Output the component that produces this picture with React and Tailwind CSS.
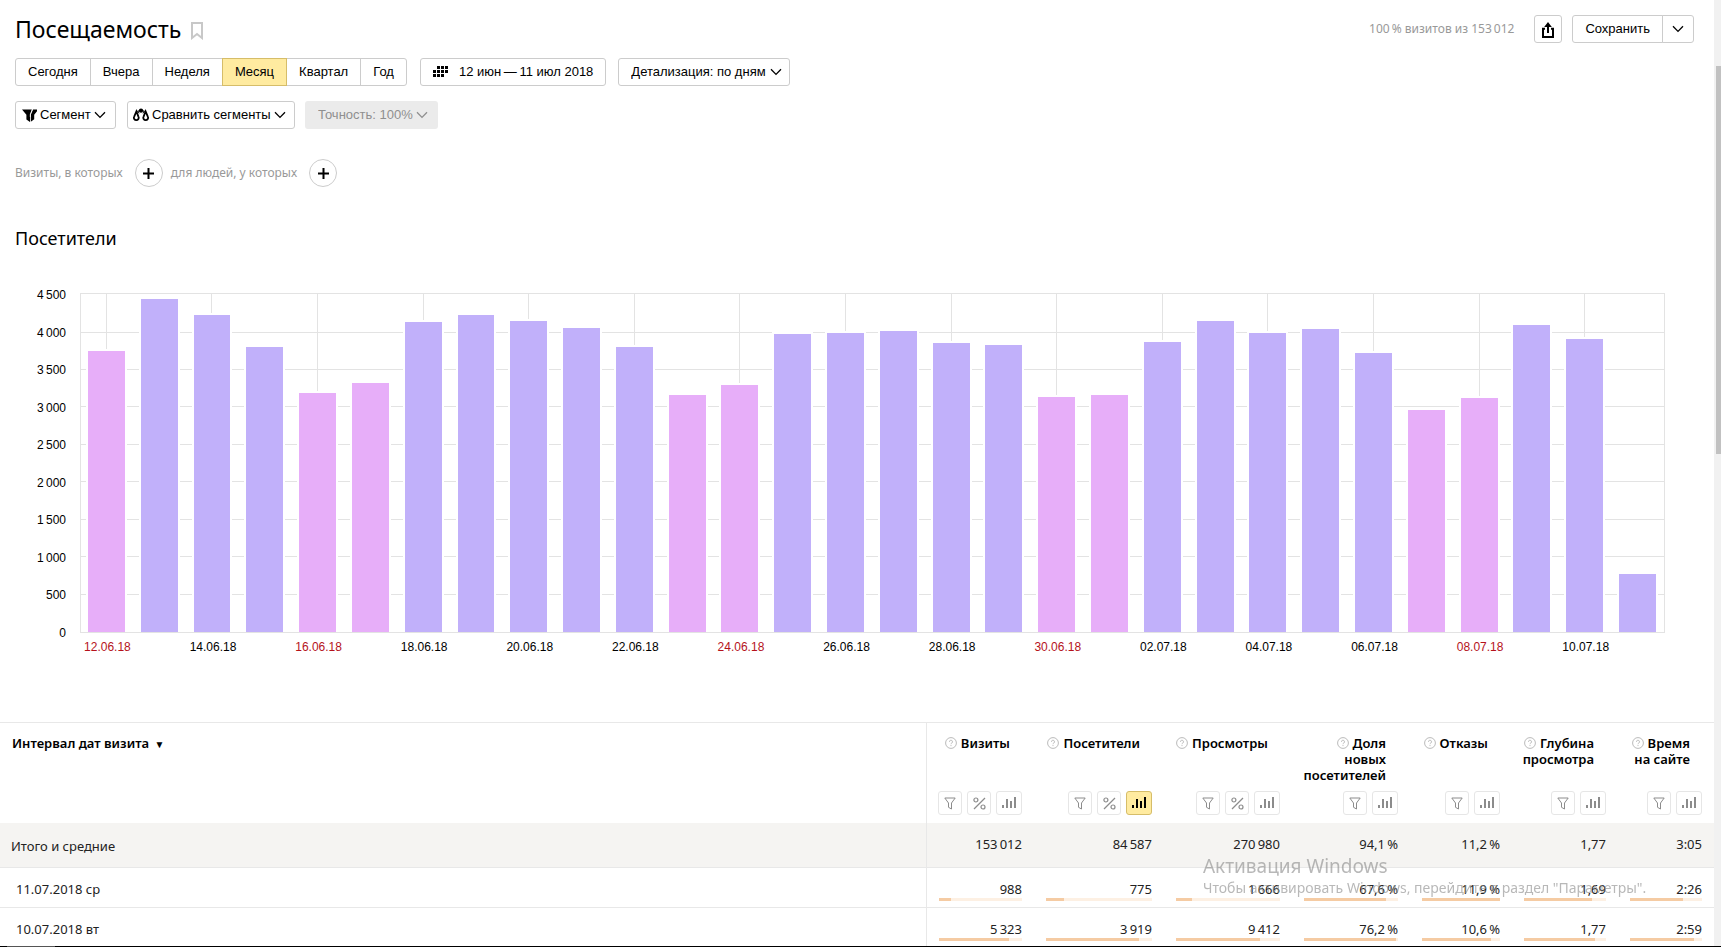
import React from 'react';
import clsx from 'clsx';

const periods = ['Сегодня', 'Вчера', 'Неделя', 'Месяц', 'Квартал', 'Год'];

const visitors = [
  { date: '12.06.18', value: 3760, holiday: true },
  { date: '13.06.18', value: 4453 },
  { date: '14.06.18', value: 4240 },
  { date: '15.06.18', value: 3813 },
  { date: '16.06.18', value: 3187, holiday: true },
  { date: '17.06.18', value: 3333, holiday: true },
  { date: '18.06.18', value: 4135 },
  { date: '19.06.18', value: 4240 },
  { date: '20.06.18', value: 4150 },
  { date: '21.06.18', value: 4065 },
  { date: '22.06.18', value: 3813 },
  { date: '23.06.18', value: 3160, holiday: true },
  { date: '24.06.18', value: 3295, holiday: true },
  { date: '25.06.18', value: 3975 },
  { date: '26.06.18', value: 3990 },
  { date: '27.06.18', value: 4025 },
  { date: '28.06.18', value: 3860 },
  { date: '29.06.18', value: 3830 },
  { date: '30.06.18', value: 3135, holiday: true },
  { date: '01.07.18', value: 3165, holiday: true },
  { date: '02.07.18', value: 3875 },
  { date: '03.07.18', value: 4150 },
  { date: '04.07.18', value: 4000 },
  { date: '05.07.18', value: 4053 },
  { date: '06.07.18', value: 3733 },
  { date: '07.07.18', value: 2960, holiday: true },
  { date: '08.07.18', value: 3120, holiday: true },
  { date: '09.07.18', value: 4107 },
  { date: '10.07.18', value: 3919 },
  { date: '11.07.18', value: 775 }
];

// top edge of the plot sits a little above the last tick
const SCALE_MAX = 4515;
const ticks = [4500, 4000, 3500, 3000, 2500, 2000, 1500, 1000, 500, 0];

const columns = [
  { title: ['Визиты'], percent: true, width: 'w-[107px]' },
  { title: ['Посетители'], percent: true, active: true, width: 'w-[130px]' },
  { title: ['Просмотры'], percent: true, width: 'w-[128px]' },
  { title: ['Доля', 'новых', 'посетителей'], width: 'w-[118px]' },
  { title: ['Отказы'], width: 'w-[102px]' },
  { title: ['Глубина', 'просмотра'], width: 'w-[106px]' },
  { title: ['Время', 'на сайте'], width: 'w-[96px]' }
];

const totals = ['153\u2009012', '84\u2009587', '270\u2009980', '94,1\u2009%', '11,2\u2009%', '1,77', '3:05'];

const rows = [
  {
    date: '11.07.2018 ср',
    cells: [
      ['988', 15], ['775', 17], ['1\u2009666', 15], ['67,6\u2009%', 87], ['11,9\u2009%', 100], ['1,69', 83], ['2:26', 74]
    ]
  },
  {
    date: '10.07.2018 вт',
    cells: [
      ['5\u2009323', 84], ['3\u2009919', 88], ['9\u2009412', 81], ['76,2\u2009%', 98], ['10,6\u2009%', 89], ['1,77', 87], ['2:59', 89]
    ]
  }
];

const formatTick = (n) => (n >= 1000 ? `${Math.floor(n / 1000)}\u2009${String(n % 1000).padStart(3, '0')}` : n);

const Chevron = ({ className }) => (
  <svg width="12" height="8" viewBox="0 0 12 8" fill="none" stroke="currentColor" strokeWidth="1.3" className={className}>
    <path d="M1 1.2 6 6.4 11 1.2" />
  </svg>
);

const FunnelIcon = () => (
  <svg width="15" height="13" viewBox="0 0 15 13" fill="currentColor">
    <path d="M0 .5h9.8L8 5.4V13l-3.6-2.4V5.8z" />
    <path d="M11 .5h4v1.7L12.2 5.8v4.4L8.8 12.8V5.4z" />
    <path d="M10.6.3 8.3 5.6V8" stroke="#fff" strokeWidth=".7" fill="none" />
  </svg>
);

const ScalesIcon = () => (
  <svg width="16" height="14" viewBox="0 0 16 14" fill="currentColor">
    <circle cx="8" cy="2.6" r="2.2" />
    <path d="M3.4 3.4 5.4 8.6a2.4 2.4 0 1 1-4.2 0zM12.6 3.4l2.2 5.2a2.4 2.4 0 1 1-4.2 0z" fill="none" stroke="currentColor" strokeWidth="1.8" />
    <path d="M4 3.2 5.4 2l1 4zM12 3.2 10.6 2l-1 4z" />
  </svg>
);

const CalendarIcon = () => (
  <svg width="16" height="12" viewBox="0 0 16 12" fill="currentColor">
    {[4, 8, 12].map((x) => <rect key={x} x={x} y="0" width="3" height="3" />)}
    {[0, 4, 8, 12].map((x) => <rect key={x} x={x} y="4" width="3" height="3" />)}
    {[0, 4, 8].map((x) => <rect key={x} x={x} y="8" width="3" height="3" />)}
  </svg>
);

const ExportIcon = () => (
  <svg width="12" height="16" viewBox="0 0 12 16" className="mt-0.5">
    <path d="M3 6.8H1V15h10V6.8H9" fill="none" stroke="currentColor" strokeWidth="2" />
    <path d="M6 0l3.8 5H7v6H5V5H2.2z" fill="currentColor" />
  </svg>
);

const FilterIcon = () => (
  <svg width="12" height="13" viewBox="0 0 12 13" fill="none" stroke="currentColor" strokeWidth="1">
    <path d="M.8 1h10.4L7.5 6v6L4.5 10.3V6z" />
  </svg>
);

const PercentIcon = () => (
  <svg width="13" height="13" viewBox="0 0 13 13" fill="none" stroke="currentColor" strokeWidth="1.2">
    <circle cx="2.9" cy="3" r="2" />
    <circle cx="10" cy="10" r="2" />
    <path d="M12 1 1 12" />
  </svg>
);

const BarsIcon = () => (
  <svg width="15" height="12" viewBox="0 0 15 12" fill="currentColor">
    <rect x="0" y="8" width="2" height="3" />
    <rect x="4" y="2" width="2" height="9" />
    <rect x="8" y="4" width="2" height="7" />
    <rect x="12" y="0" width="2" height="11" />
  </svg>
);

const HelpIcon = () => (
  <svg width="12" height="12" viewBox="0 0 12 12" fill="none" stroke="#b3b3b3" strokeWidth=".9" className="mr-1 inline-block align-[-1px]">
    <circle cx="6" cy="6" r="5.4" />
    <path d="M4.5 4.8a1.5 1.5 0 1 1 2.3 1.2c-.6.4-.8.6-.8 1.2M6 8.1v1" />
  </svg>
);

const IconButton = ({ label, active, wide, children }) => (
  <button
    type="button"
    aria-label={label}
    className={clsx(
      'flex h-6 items-center justify-center rounded-[3px] border',
      wide ? 'w-[26px]' : 'w-6',
      active ? 'border-[#d6bd69] bg-[#ffeba0] text-black' : 'border-[#e6e6e6] text-[#8c8c8c]'
    )}
  >
    {children}
  </button>
);

const PlusButton = ({ label }) => (
  <button type="button" aria-label={label} className="flex h-7 w-7 items-center justify-center rounded-full border border-[#ccc]">
    <svg width="11" height="11" viewBox="0 0 11 11" stroke="currentColor" strokeWidth="2">
      <path d="M5.5 0v11M0 5.5h11" />
    </svg>
  </button>
);

const Toolbar = () => (
  <div className="px-[15px] font-['Liberation_Sans',sans-serif] text-[13px]">
    <div className="mt-[15px] flex gap-3">
      <div className="mr-px flex h-7">
        {periods.map((period) => (
          <button
            key={period}
            type="button"
            className={clsx(
              '-ml-px border px-3 first:ml-0 first:rounded-l-[3px] last:rounded-r-[3px]',
              period === 'Месяц' ? 'relative border-[#d6bd69] bg-[#ffeba0]' : 'border-[#ccc]'
            )}
          >
            {period}
          </button>
        ))}
      </div>
      <button type="button" className="flex h-7 items-center gap-2.5 rounded-[3px] border border-[#ccc] px-3">
        <CalendarIcon />
        {'12 июн\u2009—\u200911 июл 2018'}
      </button>
      <div className="relative">
        <select aria-label="Детализация" className="h-7 w-[172px] appearance-none rounded-[3px] border border-[#ccc] pl-3">
          <option>Детализация: по дням</option>
        </select>
        <Chevron className="pointer-events-none absolute top-2.5 right-2" />
      </div>
    </div>

    <div className="mt-[15px] flex gap-[11px]">
      <button type="button" className="flex h-7 w-[101px] items-center gap-[3px] rounded-[3px] border border-[#ccc] pl-1.5">
        <FunnelIcon />
        Сегмент
        <Chevron />
      </button>
      <button type="button" className="flex h-7 w-[168px] items-center gap-[3px] rounded-[3px] border border-[#ccc] pl-[5px]">
        <ScalesIcon />
        Сравнить сегменты
        <Chevron />
      </button>
      <div className="relative -ml-px text-[#8f8f8f]">
        <select aria-label="Точность" disabled className="h-7 w-[133px] appearance-none rounded-[3px] bg-[#ebebeb] pl-[13px] opacity-100">
          <option>Точность: 100%</option>
        </select>
        <Chevron className="pointer-events-none absolute top-2.5 right-2.5" />
      </div>
    </div>
  </div>
);

const Chart = () => (
  <section>
    <h2 className="mt-[39px] px-[15px] text-lg leading-6">Посетители</h2>
    <div className="mt-[43px] pr-[49px] font-['Liberation_Sans',sans-serif] text-xs">
      <div className="flex">
        <div className="-mt-1.5 -mb-2 flex w-20 flex-col justify-between pr-3.5 text-right leading-4">
          {ticks.map((tick) => <span key={tick}>{formatTick(tick)}</span>)}
        </div>
        <div className="relative h-[340px] flex-1 border border-[#e3e3e3]">
          {ticks.slice(1, -1).map((tick) => (
            <div key={tick} className="absolute inset-x-0 h-px bg-[#e3e3e3]" style={{ bottom: `${(tick / SCALE_MAX) * 100}%` }} />
          ))}
          <div className="relative -ml-px flex h-full overflow-hidden">
            {visitors.map((day, index) => (
              <div key={day.date} className="flex flex-1 flex-col items-center">
                <div className={clsx('w-px flex-1', index % 2 === 0 && 'bg-[#e3e3e3]')} />
                <div
                  className={clsx('w-[70%] shadow-[0_0_0_2px_#fff]', day.holiday ? 'bg-[#e7aef9]' : 'bg-[#c1b0fa]')}
                  style={{ height: `${(day.value / SCALE_MAX) * 100}%` }}
                />
              </div>
            ))}
          </div>
        </div>
      </div>
      <div className="mt-1.5 flex pl-[81px] leading-4">
        {visitors.map((day, index) => (
          <div key={day.date} className={clsx('flex-1 text-center', day.holiday && 'text-[#b5121b]')}>
            {index % 2 === 0 && day.date}
          </div>
        ))}
      </div>
    </div>
  </section>
);

const ReportTable = () => (
  <table className="mt-[67px] w-full table-fixed border-separate border-spacing-0 border-t border-[#e8e8e8] text-[13px]">
    <thead>
      <tr>
        <th className="h-[100px] border-r border-[#e8e8e8] pt-3 pl-3 text-left align-top leading-4 font-semibold">
          Интервал дат визита <span className="ml-0.5 text-[10px]">▼</span>
        </th>
        {columns.map((column) => (
          <th key={column.title[0]} className={clsx('h-[100px] px-3 pt-3 pb-2 align-top', column.width)}>
            <div className="flex h-20 flex-col items-end justify-between">
              <div className="pr-3 text-right leading-4 font-semibold whitespace-nowrap">
                <HelpIcon />
                {column.title.map((line, index) => (
                  <React.Fragment key={line}>
                    {index > 0 && <br />}
                    {line}
                  </React.Fragment>
                ))}
              </div>
              <div className="flex gap-[5px]">
                <IconButton label="Фильтр"><FilterIcon /></IconButton>
                {column.percent && <IconButton label="Проценты"><PercentIcon /></IconButton>}
                <IconButton label="На графике" wide active={column.active}><BarsIcon /></IconButton>
              </div>
            </div>
          </th>
        ))}
      </tr>
    </thead>
    <tbody className="text-[#222]">
      <tr className="bg-[#f5f4f2]">
        <td className="h-[45px] border-r border-b border-[#e8e8e8] pt-1 pl-[11px]">Итого и средние</td>
        {totals.map((total, index) => (
          <td key={index} className="border-b border-[#e8e8e8] px-3 text-right">{total}</td>
        ))}
      </tr>
      {rows.map((row) => (
        <tr key={row.date}>
          <td className="h-10 border-r border-b border-[#e8e8e8] pt-1 pl-4">{row.date}</td>
          {row.cells.map(([value, share], index) => (
            <td key={index} className="h-10 border-b border-[#e8e8e8] px-3 pt-[13px] pb-1.5 text-right leading-4">
              {value}
              <div className="mt-px h-[3px] bg-[#fdf0e3]">
                <div className="h-full bg-[#f5cba3]" style={{ width: `${share}%` }} />
              </div>
            </td>
          ))}
        </tr>
      ))}
    </tbody>
  </table>
);

export default function App() {
  return (
    <div className="h-screen overflow-hidden bg-white pr-[7px] font-['Noto_Sans',sans-serif] text-black">
      <main>
        <header className="mt-[15px] flex h-7 items-center pr-5 pl-[15px]">
          <h1 className="text-[23px] leading-7">Посещаемость</h1>
          <svg width="12" height="18" viewBox="0 0 12 18" fill="none" stroke="#c8c8c8" strokeWidth="2" className="mt-1 ml-2.5">
            <path d="M1 1h10v15l-5-4-5 4z" />
          </svg>
          <span className="mr-5 ml-auto text-xs text-[#999]">{'100\u2009% визитов из 153\u2009012'}</span>
          <button type="button" aria-label="Экспорт" className="mr-2.5 flex h-7 w-7 items-center justify-center rounded-[3px] border border-[#ccc]">
            <ExportIcon />
          </button>
          <div className="flex h-7 font-['Liberation_Sans',sans-serif] text-[13px]">
            <button type="button" className="rounded-l-[3px] border border-[#ccc] px-3">Сохранить</button>
            <button type="button" aria-label="Другие варианты" className="-ml-px flex w-8 items-center justify-center rounded-r-[3px] border border-[#ccc]">
              <Chevron />
            </button>
          </div>
        </header>

        <Toolbar />

        <div className="mt-[30px] flex h-7 items-center px-[15px] text-xs text-[#999]">
          Визиты, в которых
          <span className="mr-2 ml-3 text-black"><PlusButton label="Добавить условие для визитов" /></span>
          для людей, у которых
          <span className="ml-3 text-black"><PlusButton label="Добавить условие для людей" /></span>
        </div>

        <Chart />
        <ReportTable />
      </main>

      <div className="pointer-events-none fixed right-14 bottom-[49px] w-[462px] text-[#888]/60">
        <p className="text-[19px] leading-6">Активация Windows</p>
        <p className="text-sm leading-5">Чтобы активировать Windows, перейдите в раздел "Параметры".</p>
      </div>

      <div className="fixed inset-y-0 right-0 w-[7px] bg-[#f1f1f1] pt-[66px] pl-0.5">
        <div className="h-[388px] bg-[#c1c1c1]" />
      </div>
      <div className="fixed inset-x-0 bottom-0 h-px bg-black pl-[7px]">
        <div className="h-px w-12 bg-[#555]" />
      </div>
    </div>
  );
}
